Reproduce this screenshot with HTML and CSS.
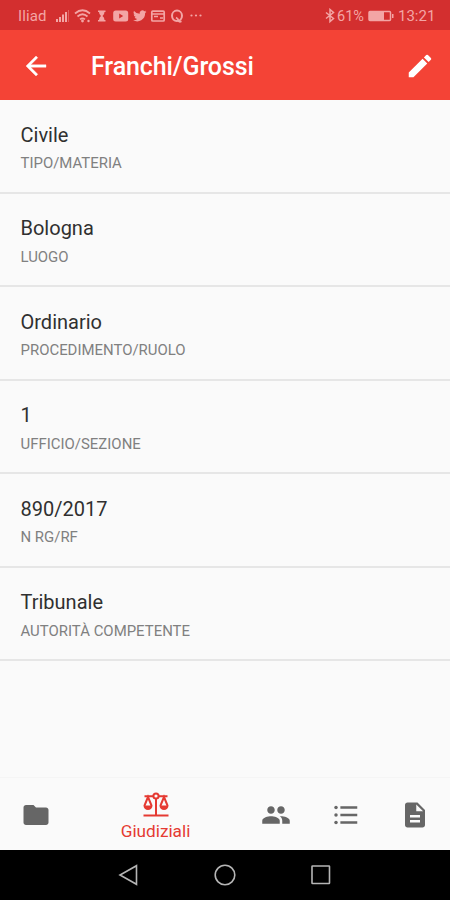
FILE: index.html
```html
<!DOCTYPE html>
<html lang="it">
<head>
<meta charset="utf-8">
<meta name="viewport" content="width=device-width">
<title>Franchi/Grossi</title>
<link rel="stylesheet" href="styles.css">
</head>
<body>
<div class="status">
  <span class="carrier">Iliad</span>
  <svg class="status-icons" width="148" height="16" viewBox="0 0 148 16">
    <path d="M1 14v-3h2v3zM4 14V9h2v5zM7 14V6.500h2V14zM10 14V4h2v10z"/>
    <path d="M13.200 14V2h.8v12z" opacity=".5"/>
    <g fill="none" stroke="currentColor" stroke-width="1.700">
      <path d="M20 5.500Q27.500-1 35 5.500M22.500 8.500Q27.500 4 32.500 8.500M25 11.300Q27.500 9.300 30 11.300"/>
      <rect x="96.800" y="3.200" width="12.400" height="9.800" rx="1"/>
      <path d="M97 6h12M99 8.500h4M105 10h3"/>
      <ellipse cx="122" cy="7.800" rx="5" ry="5.200" stroke-width="2"/>
      <path d="M121 9.500q2 1 2.500 3t3 .8" stroke-width="1.800"/>
    </g>
    <circle cx="27.500" cy="13" r="1.400"/><circle cx="33.500" cy="13" r="1.200"/>
    <path d="M42.500 2.500h7.500v1.500h-1q0 2.500-2 4q2 1.500 2 4h1v1.500h-7.500V12h1q0-2.500 2-4q-2-1.500-2-4h-1z" transform="translate(.5 0)"/>
    <path fill-rule="evenodd" d="M60 2.500h10q2.500 0 2.500 2.500v6q0 2.500-2.500 2.500H60q-2.500 0-2.500-2.500V5q0-2.500 2.500-2.500zm3.500 3v5L67.500 8z" transform="translate(.7 0)"/>
    <path transform="translate(77.500 .6) scale(.61)" d="M23 5.100a9 9 0 0 1-2.600.7a4.500 4.500 0 0 0 2-2.500a9 9 0 0 1-2.900 1.100a4.500 4.500 0 0 0-7.700 4.100A12.800 12.800 0 0 1 2.500 3.800a4.500 4.500 0 0 0 1.400 6a4.500 4.500 0 0 1-2-.6a4.500 4.500 0 0 0 3.600 4.500a4.500 4.500 0 0 1-2 .1a4.500 4.500 0 0 0 4.200 3.100A9 9 0 0 1 1 18.800A12.800 12.800 0 0 0 20.700 7.400A9 9 0 0 0 23 5.100z"/>
    <circle cx="136.500" cy="7.500" r="1.100"/><circle cx="141" cy="7.500" r="1.100"/><circle cx="145.500" cy="7.500" r="1.100"/>
  </svg>
  <svg class="bluetooth" width="10" height="16" viewBox="0 0 10 16"><path d="M1 4.500l7.500 6L5 13.500v-12L8.500 4.500L1 10.500"/></svg>
  <span class="percent">61%</span>
  <svg class="battery" width="26" height="12" viewBox="0 0 26 12"><rect x="1" y="1.500" width="21.500" height="9" rx="1" fill="none" stroke="currentColor" stroke-width="1.500"/><path d="M1 1h15v10H1zM24 4h1.500v4H24z"/></svg>
  <span class="clock">13:21</span>
</div>
<header class="appbar">
  <svg class="icon" viewBox="0 0 24 24"><path d="M20 11H7.830l5.590-5.590L12 4l-8 8 8 8 1.410-1.410L7.830 13H20v-2z" stroke="currentColor" stroke-width=".3"/></svg>
  <h1>Franchi/Grossi</h1>
  <svg class="icon" viewBox="0 0 24 24"><path d="M3 17.250V21h3.750L17.810 9.940l-3.750-3.750L3 17.250zM20.710 7.040a1 1 0 0 0 0-1.410l-2.340-2.340a1 1 0 0 0-1.410 0l-1.830 1.830 3.750 3.750 1.830-1.830z"/></svg>
</header>
<main>
  <div class="row"><p class="value">Civile</p><p class="label">TIPO/MATERIA</p></div>
  <div class="row"><p class="value">Bologna</p><p class="label">LUOGO</p></div>
  <div class="row"><p class="value">Ordinario</p><p class="label">PROCEDIMENTO/RUOLO</p></div>
  <div class="row"><p class="value">1</p><p class="label">UFFICIO/SEZIONE</p></div>
  <div class="row"><p class="value">890/2017</p><p class="label">N RG/RF</p></div>
  <div class="row"><p class="value">Tribunale</p><p class="label">AUTORITÀ COMPETENTE</p></div>
</main>
<nav class="tabs">
  <div class="tab"><svg class="icon" viewBox="0 0 24 24"><path d="M10 4H4c-1.100 0-1.990.9-1.990 2L2 18c0 1.100.9 2 2 2h16c1.100 0 2-.9 2-2V8c0-1.100-.9-2-2-2h-8l-2-2z"/></svg></div>
  <div class="tab active">
    <svg class="scales" width="26" height="26" viewBox="0 0 26 26"><path d="M.5 23.500h25M13 6v17M1.500 4.200h8.500M16 4.200h8.500"/><circle cx="13" cy="4" r="2.600"/><path d="M5 5L1.500 13.500a3.500 3.500 0 0 0 7 0zM21 5l-3.500 8.500a3.500 3.500 0 0 0 7 0z"/><path class="pan" d="M1.500 13.500h7a3.500 3.500 0 0 1-7 0zM17.500 13.500h7a3.500 3.500 0 0 1-7 0z"/></svg>
    <span>Giudiziali</span>
  </div>
  <div class="tab"><svg class="icon" viewBox="0 0 24 24"><path d="M16 11c1.660 0 2.990-1.340 2.990-3S17.660 5 16 5s-3 1.340-3 3 1.340 3 3 3zm-8 0c1.660 0 2.990-1.340 2.990-3S9.660 5 8 5 5 6.340 5 8s1.340 3 3 3zm0 2c-2.330 0-7 1.170-7 3.500V19h14v-2.500C15 14.170 10.330 13 8 13zm8 0c-.29 0-.62.02-.97.05 1.160.84 1.970 1.970 1.970 3.450V19h6v-2.500c0-2.330-4.670-3.500-7-3.500z"/></svg></div>
  <div class="tab"><svg class="icon" viewBox="0 0 24 24"><path d="M7.500 5H21v2H7.500zM7.500 11H21v2H7.500zM7.500 17H21v2H7.500z"/><circle cx="4" cy="6" r="1.400"/><circle cx="4" cy="12" r="1.400"/><circle cx="4" cy="18" r="1.400"/></svg></div>
  <div class="tab"><svg class="icon" viewBox="0 0 24 24"><path d="M14 2H6c-1.100 0-1.990.9-1.990 2L4 20c0 1.100.89 2 1.990 2H18c1.100 0 2-.9 2-2V8l-6-6zm2 16H8v-2h8v2zm0-4H8v-2h8v2zm-3-5V3.500L18.500 9H13z"/></svg></div>
</nav>
<div class="system">
  <svg width="24" height="24" viewBox="0 0 24 24"><path d="M19.500 2.700v18.600L3 12z"/></svg>
  <svg width="24" height="24" viewBox="0 0 24 24"><circle cx="12" cy="12" r="9.800"/></svg>
  <svg width="24" height="24" viewBox="0 0 24 24"><rect x="3" y="3" width="17.500" height="17.500" rx=".5"/></svg>
</div>
</body>
</html>
```
FILE: styles.css
```css
* { box-sizing: border-box; }
html { background: #fafafa; }
body {
  margin: 0;
  width: 450px;
  height: 900px;
  display: flex;
  flex-direction: column;
  overflow: hidden;
  background: #fafafa;
  font-family: Roboto, sans-serif;
}
h1, p { margin: 0; }
svg { display: block; flex: none; fill: currentColor; }
.icon { width: 30px; height: 30px; }

.status {
  flex: none;
  height: 30px;
  padding: 2px 14px 0 18px;
  display: flex;
  align-items: center;
  background: #d32f2f;
  color: #f3a5a5;
  font-size: 15px;
  line-height: 18px;
}
.carrier { width: 37px; letter-spacing: 0.1px; }
.bluetooth { margin-left: 122px; fill: none; stroke: currentColor; stroke-width: 1.5; }
.percent { width: 32px; margin-left: 2px; padding-top: 1px; font-size: 14.5px; }
.battery { margin-left: -1px; }
.clock { margin-left: 4px; }

.appbar {
  flex: none;
  height: 70px;
  padding: 2px 15px 0 21px;
  display: flex;
  align-items: center;
  background: #f44336;
  color: #fff;
}
.appbar h1 {
  flex: 1;
  margin-left: 40px;
  padding-top: 2px;
  font-size: 25px;
  font-weight: 500;
  line-height: 30px;
  letter-spacing: -0.1px;
}

main { flex: 1; }
.row {
  height: 93.5px;
  padding: 22.9px 20.5px 0;
  border-bottom: 2px solid #e6e6e6;
}
.value { font-size: 20px; line-height: 24px; color: #303030; }
.label { margin-top: 7.6px; font-size: 14.95px; line-height: 18px; color: #808080; }

.tabs {
  flex: none;
  height: 73px;
  padding: 1px 0 0 0.5px;
  display: grid;
  grid-template-columns: 70px 170px 70px 70px 69.5px;
  align-items: center;
  border-top: 1px solid #f5f5f5;
  color: #666;
}
.tab { display: flex; flex-direction: column; align-items: center; }
.active { padding-top: 3px; color: #e53a32; font-size: 17.2px; line-height: 20px; }
.active span { margin-top: 3px; }
.scales { fill: none; stroke: currentColor; stroke-width: 2; }
.pan { fill: currentColor; stroke: none; }

.system {
  flex: none;
  height: 50px;
  display: flex;
  justify-content: center;
  align-items: center;
  gap: 72px;
  background: #000;
}
.system svg { fill: none; stroke: #b5b5b5; stroke-width: 1.6; }
```
